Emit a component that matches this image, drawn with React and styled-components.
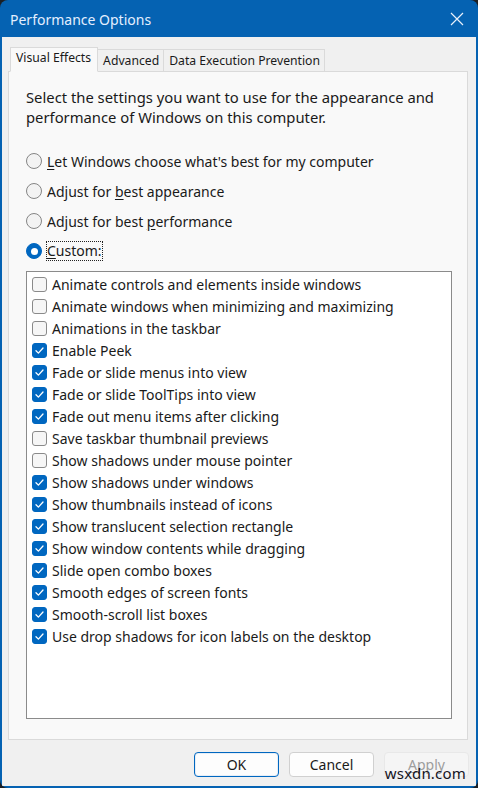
import React from "react";
import styled, { createGlobalStyle } from "styled-components";

const Global = createGlobalStyle`
  html, body { margin: 0; padding: 0; background: #1b1f24; }
  body { font-family: "Noto Sans", "Open Sans", sans-serif; }
  * { box-sizing: border-box; }
`;

const Win = styled.div`
  position: relative;
  width: 478px;
  height: 788px;
  background: #0562b2;
  border-radius: 8px;
  display: flex;
  flex-direction: column;
  padding: 0 2px 2px 2px;
  overflow: hidden;
`;

const TitleBar = styled.div`
  height: 37px;
  flex: none;
  display: flex;
  align-items: center;
  justify-content: space-between;
  padding: 1px 12px 0 8px;
  color: #e4efff;
  font-size: 14px;
`;

const Body = styled.div`
  flex: 1;
  background: #f0f0f0;
  display: flex;
  flex-direction: column;
  padding-top: 9px;
  min-height: 0;
`;

const Tabs = styled.div`
  display: flex;
  align-items: flex-end;
  padding-left: 8px;
  height: 25px;
  position: relative;
  z-index: 1;
`;

const Tab = styled.div`
  font-size: 12.2px;
  color: #1a1a1a;
  border: 1px solid #dadada;
  border-left-width: ${p => (p.$first ? "1px" : "0")};
  border-bottom: ${p => (p.$active ? "1px solid #f9f9f9" : "0")};
  background: ${p => (p.$active ? "#f9f9f9" : "#f0f0f0")};
  height: ${p => (p.$active ? "25px" : "22px")};
  padding: ${p => (p.$active ? "1px 6px 0 5px" : "2px 4px 0 5px")};
  line-height: 18px;
  margin-bottom: ${p => (p.$active ? "-1px" : "0")};
`;

const Panel = styled.div`
  flex: 1;
  margin: 0 8px 0 6px;
  background: #f9f9f9;
  border: 1px solid #dadada;
  padding: 15px 15px 20px 17px;
  display: flex;
  flex-direction: column;
  min-height: 0;
`;

const Desc = styled.p`
  margin: 0;
  font-size: 14.8px;
  line-height: 20px;
  color: #1a1a1a;
`;

const RadioGroup = styled.div`
  margin-top: 19px;
  display: flex;
  flex-direction: column;
`;

const RadioRow = styled.div`
  height: 30px;
  display: flex;
  align-items: center;
  gap: 5px;
  font-size: 14px;
  color: #1a1a1a;
`;

const RadioDot = styled.span`
  width: 16px;
  height: 16px;
  border-radius: 50%;
  flex: none;
  background: ${p => (p.$on ? "#0067c0" : "#f3f3f3")};
  border: 1px solid ${p => (p.$on ? "#0067c0" : "#858585")};
  display: flex;
  align-items: center;
  justify-content: center;
  &::after {
    content: "";
    width: 7px;
    height: 7px;
    border-radius: 50%;
    background: #fff;
    display: ${p => (p.$on ? "block" : "none")};
  }
`;

const Focus = styled.span`
  outline: 1px dotted #222;
  outline-offset: 0px;
  line-height: 18px;
`;

const U = styled.span`
  text-decoration: underline;
  text-underline-offset: 2px;
`;

const ListBox = styled.div`
  margin-top: 5px;
  flex: 1;
  background: #fff;
  border: 1px solid #8b8b8b;
  padding: 1px 0 0 5px;
`;

const CheckRow = styled.div`
  height: 22px;
  display: flex;
  align-items: center;
  gap: 5px;
  font-size: 14px;
  color: #1a1a1a;
`;

const Box = styled.span`
  width: 15px;
  height: 15px;
  flex: none;
  border-radius: 3px;
  background: ${p => (p.$on ? "#0067c0" : "#f6f6f6")};
  border: 1px solid ${p => (p.$on ? "#0067c0" : "#8a8a8a")};
  display: flex;
  align-items: center;
  justify-content: center;
`;

const Footer = styled.div`
  flex: none;
  display: flex;
  justify-content: flex-end;
  gap: 10px;
  padding: 12px 7px 9px 0;
`;

const Button = styled.div`
  width: 85px;
  height: 25px;
  border-radius: 4px;
  font-size: 14px;
  display: flex;
  align-items: center;
  justify-content: center;
  background: ${p => (p.$disabled ? "#f5f5f5" : "#fdfdfd")};
  color: ${p => (p.$disabled ? "#9d9d9d" : "#1a1a1a")};
  border: 1px solid ${p => (p.$primary ? "#0067c0" : p.$disabled ? "#e8e8e8" : "#d0d0d0")};
  box-shadow: ${p => (p.$primary ? "inset 0 0 0 1px #e6eef7" : "none")};
`;

const Watermark = styled.div`
  position: absolute;
  right: 12px;
  bottom: 6px;
  font-size: 15px;
  line-height: 18px;
  color: #14141e;
  letter-spacing: 0.2px;
`;

const Check = () => (
  <svg width="11" height="11" viewBox="0 0 11 11">
    <path d="M2 5.8 L4.4 8.1 L9 3" fill="none" stroke="#fff" strokeWidth="1.3" strokeLinecap="round" strokeLinejoin="round" />
  </svg>
);

const Close = () => (
  <svg width="14" height="14" viewBox="0 0 14 14">
    <path d="M1 1 L13 13 M13 1 L1 13" stroke="#e8f0fb" strokeWidth="1.2" />
  </svg>
);

const items = [
  ["Animate controls and elements inside windows", false],
  ["Animate windows when minimizing and maximizing", false],
  ["Animations in the taskbar", false],
  ["Enable Peek", true],
  ["Fade or slide menus into view", true],
  ["Fade or slide ToolTips into view", true],
  ["Fade out menu items after clicking", true],
  ["Save taskbar thumbnail previews", false],
  ["Show shadows under mouse pointer", false],
  ["Show shadows under windows", true],
  ["Show thumbnails instead of icons", true],
  ["Show translucent selection rectangle", true],
  ["Show window contents while dragging", true],
  ["Slide open combo boxes", true],
  ["Smooth edges of screen fonts", true],
  ["Smooth-scroll list boxes", true],
  ["Use drop shadows for icon labels on the desktop", true],
];

export default function App() {
  return (
    <>
      <Global />
      <Win>
        <TitleBar>
          <span>Performance Options</span>
          <Close />
        </TitleBar>
        <Body>
          <Tabs>
            <Tab $active $first>Visual Effects</Tab>
            <Tab>Advanced</Tab>
            <Tab>Data Execution Prevention</Tab>
          </Tabs>
          <Panel>
            <Desc>
              Select the settings you want to use for the appearance and
              <br />
              performance of Windows on this computer.
            </Desc>
            <RadioGroup>
              <RadioRow>
                <RadioDot />
                <span><U>L</U>et Windows choose what's best for my computer</span>
              </RadioRow>
              <RadioRow>
                <RadioDot />
                <span>Adjust for <U>b</U>est appearance</span>
              </RadioRow>
              <RadioRow>
                <RadioDot />
                <span>Adjust for best <U>p</U>erformance</span>
              </RadioRow>
              <RadioRow>
                <RadioDot $on />
                <Focus><U>C</U>ustom:</Focus>
              </RadioRow>
            </RadioGroup>
            <ListBox>
              {items.map(([label, on]) => (
                <CheckRow key={label}>
                  <Box $on={on}>{on && <Check />}</Box>
                  <span>{label}</span>
                </CheckRow>
              ))}
            </ListBox>
          </Panel>
          <Footer>
            <Button $primary>OK</Button>
            <Button>Cancel</Button>
            <Button $disabled><span><U>A</U>pply</span></Button>
          </Footer>
        </Body>
        <Watermark>wsxdn.com</Watermark>
      </Win>
    </>
  );
}
